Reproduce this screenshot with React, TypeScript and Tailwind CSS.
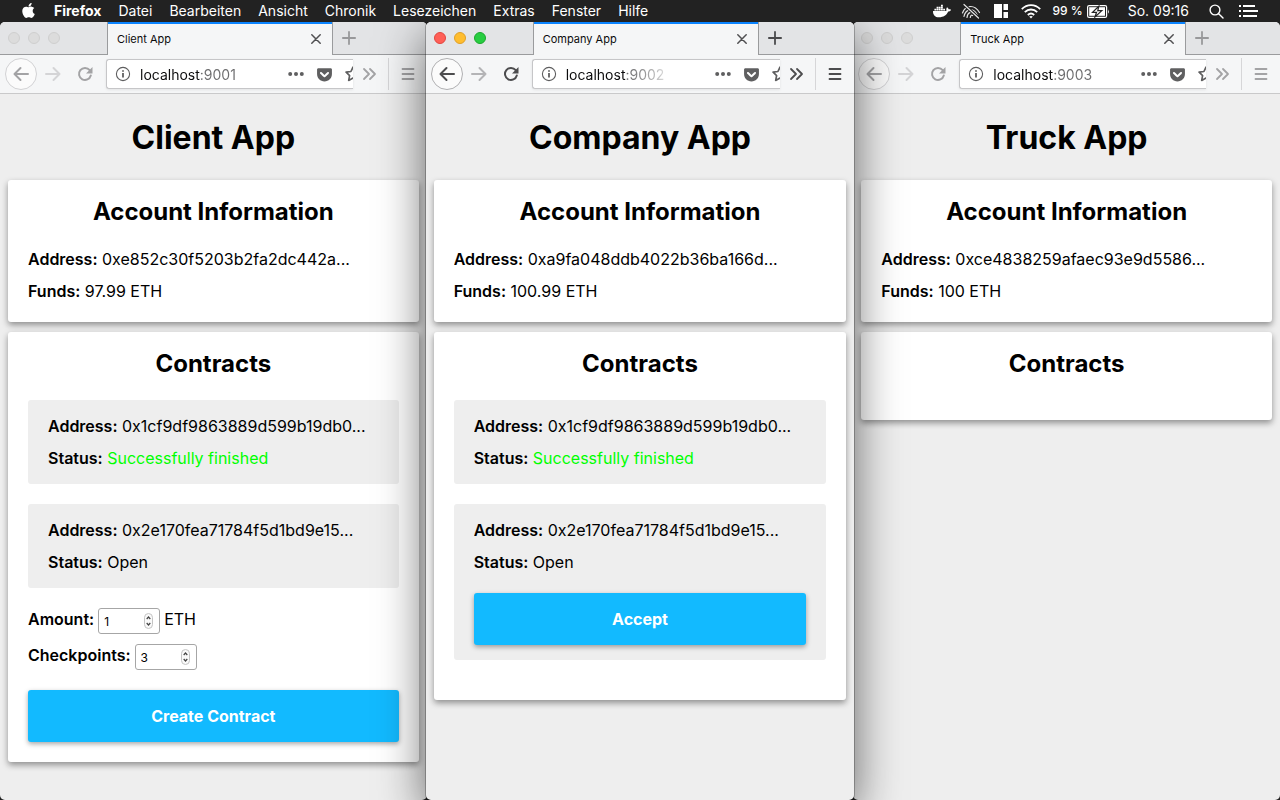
import type { ReactNode } from 'react'
import { FaApple, FaDocker, FaGetPocket } from 'react-icons/fa'

type Contract = { address: string; status: string; done?: boolean; action?: string }

type AppWindow = {
  title: string
  url: string
  urlClass: string
  address: string
  funds: string
  contracts: Contract[]
  active?: boolean
  form?: boolean
}

const menus = ['Datei', 'Bearbeiten', 'Ansicht', 'Chronik', 'Lesezeichen', 'Extras', 'Fenster', 'Hilfe']

const finished: Contract = { address: '0x1cf9df9863889d599b19db0...', status: 'Successfully finished', done: true }

const windows: AppWindow[] = [
  {
    title: 'Client App',
    url: 'localhost:9001',
    urlClass: 'bg-[linear-gradient(90deg,#0c0c0d_60px,#6c6c6d_60px)]',
    address: '0xe852c30f5203b2fa2dc442a...',
    funds: '97.99 ETH',
    contracts: [finished, { address: '0x2e170fea71784f5d1bd9e15...', status: 'Open' }],
    form: true,
  },
  {
    title: 'Company App',
    url: 'localhost:9002',
    urlClass: 'bg-[linear-gradient(90deg,#0c0c0d_60px,#6c6c6d_60px,#8c8c8d_75px,#dddddd_100px)]',
    address: '0xa9fa048ddb4022b36ba166d...',
    funds: '100.99 ETH',
    contracts: [finished, { address: '0x2e170fea71784f5d1bd9e15...', status: 'Open', action: 'Accept' }],
    active: true,
  },
  {
    title: 'Truck App',
    url: 'localhost:9003',
    urlClass: 'bg-[linear-gradient(90deg,#0c0c0d_60px,#6c6c6d_60px)]',
    address: '0xce4838259afaec93e9d5586...',
    funds: '100 ETH',
    contracts: [],
  },
]

function MenuBar() {
  return (
    <header className="relative z-20 flex h-[22px] items-center justify-between bg-[#222] pl-5 pr-[22px] text-[14px] leading-[22px] text-white">
      <nav className="flex items-center gap-[17px]">
        <button aria-label="Apple"><FaApple size={17} className="-mt-0.5" /></button>
        <button className="font-bold">Firefox</button>
        {menus.map((m) => <button key={m}>{m}</button>)}
      </nav>
      <div className="flex items-center">
        <FaDocker size={18} />
        <svg className="ml-2.5" width="20" height="16" viewBox="0 0 20 16" fill="none" stroke="#e4e4e4" strokeWidth="1.200" strokeLinecap="round">
          <path d="M1.500 10C4 2.500 13 .5 18.500 9.500M3 13.500C4.500 6 12 4 16 11.500M6 14.500C6.500 9.500 10.500 7.500 13 11.500M9.300 14.500C9.500 12.500 10.500 11.700 11.700 12.500" />
          <path d="M3 1.500L17.500 15" stroke="#222" strokeWidth="3.200" />
          <path d="M3 1.500L17.500 15" />
        </svg>
        <svg className="ml-[13px]" width="15" height="14" viewBox="0 0 15 14" fill="#fff">
          <path d="M0 0h8v14H0zM9.500 0H14v6H9.500zM9.500 8H14v6H9.500z" />
        </svg>
        <svg className="ml-3" width="20" height="15" viewBox="0 0 20 15" fill="none" stroke="#fff" strokeWidth="1.800">
          <path d="M.8 5.200C6-.2 14-.2 19.200 5.200M3.800 8.200C7.400 4.600 12.600 4.600 16.200 8.200M6.800 11C8.700 9.200 11.300 9.200 13.200 11" />
          <path d="M8.200 12.600Q10 11.200 11.800 12.600L10 14.600Z" fill="#fff" stroke="none" />
        </svg>
        <span className="ml-[11px] text-[12px] font-medium">99 %</span>
        <svg className="ml-1" width="23" height="13" viewBox="0 0 23 13" fill="none">
          <rect x=".6" y=".6" width="19" height="11.800" rx="1.500" stroke="#fff" strokeWidth="1.200" />
          <path d="M2.200 2.200H18v8.600H2.200z" fill="#fff" />
          <path d="M11.800 1.200L5.500 7.300h4L8 12l6.800-6.300h-4z" fill="#fff" stroke="#222" strokeWidth="1.200" />
          <path d="M21 4.200q1.600 2.300 0 4.600z" fill="#fff" />
        </svg>
        <span className="ml-[18px]">So. 09:16</span>
        <svg className="ml-5" width="15" height="15" viewBox="0 0 15 15" fill="none" stroke="#fff" strokeWidth="1.400" strokeLinecap="round">
          <circle cx="6" cy="6" r="4.900" /><path d="M9.700 9.700L14 14" />
        </svg>
        <svg className="ml-[15px]" width="19" height="12" viewBox="0 0 19 12" stroke="#fff" strokeWidth="2">
          <path d="M0 1h2M4 1h12M0 6h2M4 6h15M0 11h2M4 11h14" />
        </svg>
      </div>
    </header>
  )
}

function TabStrip({ title, active }: { title: string; active?: boolean }) {
  const idle = 'border-[#cfcfcf] bg-[#dcdcdc]'
  return (
    <div className="flex h-[33px] bg-[#e3e4e6]">
      <div className="flex w-[107px] items-center gap-2 border-b border-[#9a9b9d] pl-2">
        <button aria-label="Close" className={`size-3 rounded-full border ${active ? 'border-[#e2463f] bg-[#ff5f57]' : idle}`} />
        <button aria-label="Minimize" className={`size-3 rounded-full border ${active ? 'border-[#e0a028] bg-[#ffbd2e]' : idle}`} />
        <button aria-label="Zoom" className={`size-3 rounded-full border ${active ? 'border-[#1ba82c] bg-[#28cd41]' : idle}`} />
      </div>
      <div className="flex w-[226px] items-center justify-between border-x border-[#9a9b9d] bg-[#f5f6f7] shadow-[inset_0_2px_#0a84ff]">
        <span className="pt-0.5 pl-[9px] text-[11px] text-[#0c0c0d]">{title}</span>
        <button aria-label="Close tab" className="p-[11px] text-[#505052]">
          <svg width="10" height="10" viewBox="0 0 10 10" stroke="currentColor" strokeWidth="1.500" strokeLinecap="round"><path d="M.8.8l8.400 8.400M9.200.8L.8 9.200" /></svg>
        </button>
      </div>
      <div className="flex flex-1 items-center border-b border-[#9a9b9d] pl-[9px]">
        <button aria-label="New tab" className={active ? 'text-[#4a4a4c]' : 'text-[#98989a]'}>
          <svg width="14" height="14" viewBox="0 0 14 14" stroke="currentColor" strokeWidth="1.800" strokeLinecap="round"><path d="M7 .9v12.200M.9 7h12.200" /></svg>
        </button>
      </div>
    </div>
  )
}

function ToolButton({ label, className = '', children }: { label: string; className?: string; children: ReactNode }) {
  return (
    <button aria-label={label} className={`flex h-8 shrink-0 items-center justify-center ${className}`}>
      <svg width="16" height="16" viewBox="0 0 16 16" fill="none" stroke="currentColor" strokeWidth="2" strokeLinecap="round" strokeLinejoin="round">
        {children}
      </svg>
    </button>
  )
}

function Toolbar({ url, urlClass, active }: { url: string; urlClass: string; active?: boolean }) {
  return (
    <div className={`flex h-[39px] items-center border-b border-[#c9c9ca] bg-[#f5f6f7] pl-[5px] ${active ? 'text-[#4c4c4e]' : 'text-[#a3a3a5]'}`}>
      <ToolButton label="Back" className={`w-8 rounded-full border bg-[#fbfbfb] ${active ? 'border-[#b0b0b2]' : 'border-[#d2d2d4]'}`}>
        <path d="M15 8H1.500M7.500 2L1.500 8l6 6" />
      </ToolButton>
      <ToolButton label="Forward" className={`w-8 ${active ? 'text-[#b4b4b6]' : 'text-[#d4d4d6]'}`}>
        <path d="M1 8h13.500M8.500 2l6 6-6 6" />
      </ToolButton>
      <ToolButton label="Reload" className="w-8">
        <path d="M13.800 9.500A6 6 0 1 1 12.700 4.200" />
        <path d="M15.500 1v6.500H9z" fill="currentColor" stroke="none" />
      </ToolButton>
      <div className="ml-[5px] flex h-[30px] min-w-0 flex-1 items-center rounded-l-[3px] border border-r-0 border-[#c6c6c8] bg-white pl-2 text-[#5f5f60] shadow-[0_1px_3px_rgba(0,0,0,0.08)]">
        <svg className="shrink-0" width="16" height="16" viewBox="0 0 16 16" fill="none" stroke="currentColor">
          <circle cx="8" cy="8" r="6.600" strokeWidth="1.100" />
          <path d="M8 7v4.500M8 4.300v1.500" strokeWidth="1.800" />
        </svg>
        <input
          aria-label="Address"
          defaultValue={url}
          className={`ml-[9px] min-w-0 flex-1 bg-clip-text text-[14px] text-transparent outline-none ${urlClass}`}
        />
        <button aria-label="Page actions" className="mr-3 shrink-0">
          <svg width="16" height="16" viewBox="0 0 16 16" fill="currentColor"><circle cx="2.200" cy="8" r="2" /><circle cx="8" cy="8" r="2" /><circle cx="13.800" cy="8" r="2" /></svg>
        </button>
        <button aria-label="Save to Pocket" className="mr-3 shrink-0"><FaGetPocket size={17} /></button>
        <button aria-label="Bookmark" className="w-2 shrink-0 overflow-hidden">
          <svg width="16" height="16" viewBox="0 0 16 16" fill="none" stroke="currentColor" strokeWidth="1.700" strokeLinejoin="round">
            <path d="M8 1.200l2.100 4.300 4.800.7-3.500 3.400.9 4.800L8 12.100l-4.300 2.300.9-4.800L1.100 6.200l4.800-.7z" />
          </svg>
        </button>
      </div>
      <ToolButton label="More tools" className="w-8"><path d="M3 3l5 5-5 5M9 3l5 5-5 5" strokeWidth="1.800" /></ToolButton>
      <div className="ml-[3px] h-8 w-px bg-[#d6d6d8]" />
      <ToolButton label="Open menu" className="w-[38px]"><path d="M2.500 3h11M2.500 8h11M2.500 13h11" strokeWidth="1.800" /></ToolButton>
    </div>
  )
}

function Card({ title, children, className = 'pb-5' }: { title: string; children?: ReactNode; className?: string }) {
  return (
    <section className={`mb-2.5 rounded-[3px] bg-white px-5 pt-4 shadow-[0_3px_6px_rgba(0,0,0,0.4)] ${className}`}>
      <h2 className="text-center text-[24px] leading-8 font-bold">{title}</h2>
      {children}
    </section>
  )
}

function Row({ label, value, className = '' }: { label: string; value: string; className?: string }) {
  return (
    <p className="truncate leading-8">
      <b className="font-semibold">{label}:</b> <span className={className}>{value}</span>
    </p>
  )
}

function PrimaryButton({ children }: { children: ReactNode }) {
  return (
    <button className="h-[52px] w-full rounded-[3px] bg-[#12baff] font-bold text-white shadow-[0_2px_5px_rgba(0,0,0,0.35)]">
      {children}
    </button>
  )
}

function NumberField({ id, label, value, unit }: { id: string; label: string; value: number; unit?: string }) {
  return (
    <div className="flex h-[26px] gap-1 leading-[22px]">
      <label htmlFor={id} className="font-semibold">{label}:</label>
      <div className="relative">
        <input
          id={id}
          type="number"
          defaultValue={value}
          className="h-[26px] w-[62px] rounded-[3px] border border-[#a6a6a6] bg-white pl-[5px] text-[12px] [appearance:textfield]"
        />
        <svg className="absolute top-[5px] right-[7px]" width="9" height="16" viewBox="0 0 9 16" fill="none">
          <rect x=".5" y=".5" width="8" height="15" rx="4" fill="#fafafa" stroke="#c4c4c4" />
          <path d="M2.700 6l1.800-2 1.800 2M2.700 10l1.800 2 1.800-2" stroke="#444" strokeWidth="1.200" />
        </svg>
      </div>
      {unit && <span>{unit}</span>}
    </div>
  )
}

function BrowserWindow({ win }: { win: AppWindow }) {
  return (
    <article className={`relative flex flex-col overflow-hidden rounded-[5px] bg-[#eee] ${win.active ? 'z-10 -mx-px shadow-[0_0_0_1px_rgba(0,0,0,0.25),0_14px_48px_rgba(0,0,0,0.6)]' : ''}`}>
      <TabStrip title={win.title} active={win.active} />
      <Toolbar url={win.url} urlClass={win.urlClass} active={win.active} />
      <main className="flex-1 px-2 pt-6 text-[16px] text-black">
        <h1 className="mb-[22px] text-center text-[32px] leading-10 font-bold">{win.title}</h1>
        <Card title="Account Information" className="pb-[15px]">
          <div className="mt-[15px]">
            <Row label="Address" value={win.address} />
            <Row label="Funds" value={win.funds} />
          </div>
        </Card>
        <Card title="Contracts">
          <div className="mt-5">
            {win.contracts.map((c) => (
              <div key={c.address} className="mb-5 rounded-[3px] bg-[#eee] px-5 py-2.5">
                <Row label="Address" value={c.address} />
                <Row label="Status" value={c.status} className={c.done ? 'text-[#00ff00]' : ''} />
                {c.action && <div className="mt-[15px] mb-[5px]"><PrimaryButton>{c.action}</PrimaryButton></div>}
              </div>
            ))}
            {win.form && (
              <form className="flex flex-col gap-2.5" onSubmit={(e) => e.preventDefault()}>
                <NumberField id="amount" label="Amount" value={1} unit="ETH" />
                <NumberField id="checkpoints" label="Checkpoints" value={3} />
                <div className="mt-2.5"><PrimaryButton>Create Contract</PrimaryButton></div>
              </form>
            )}
          </div>
        </Card>
      </main>
    </article>
  )
}

export default function App() {
  return (
    <div className="flex min-h-screen flex-col overflow-hidden bg-[#222] font-['Inter',sans-serif]">
      <MenuBar />
      <div className="grid flex-1 grid-cols-3">
        {windows.map((w) => <BrowserWindow key={w.title} win={w} />)}
      </div>
    </div>
  )
}
